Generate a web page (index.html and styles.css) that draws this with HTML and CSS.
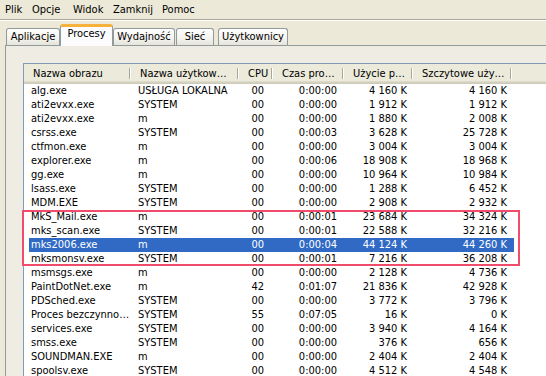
FILE: index.html
```html
<!DOCTYPE html>
<html lang="pl">
<head>
    <meta charset="UTF-8">
    <title>Menedżer zadań Windows</title>
    <link rel="stylesheet" href="styles.css">
</head>
<body>
    <div class="menubar">
        <span class="menu-item">Plik</span>
        <span class="menu-item">Opcje</span>
        <span class="menu-item">Widok</span>
        <span class="menu-item">Zamknij</span>
        <span class="menu-item">Pomoc</span>
    </div>

    <div class="tabs">
        <div class="tab tab-apps">Aplikacje</div>
        <div class="tab tab-procs active">Procesy</div>
        <div class="tab tab-perf">Wydajność</div>
        <div class="tab tab-net">Sieć</div>
        <div class="tab tab-users">Użytkownicy</div>
    </div>

    <div class="panel">
        <div class="listview">
            <table class="proc-table">
                <colgroup>
                    <col class="c-name">
                    <col class="c-user">
                    <col class="c-cpu">
                    <col class="c-time">
                    <col class="c-mem">
                    <col class="c-peak">
                    <col class="c-fill">
                </colgroup>
                <thead>
                    <tr>
                        <th>Nazwa obrazu</th>
                        <th>Nazwa użytkow…</th>
                        <th>CPU</th>
                        <th>Czas pro…</th>
                        <th>Użycie p…</th>
                        <th>Szczytowe uży…</th>
                        <th class="filler"></th>
                    </tr>
                </thead>
                <tbody>
                    <tr><td>alg.exe</td><td>USŁUGA LOKALNA</td><td class="cpu">00</td><td class="time">0:00:00</td><td class="mem">4 160 K</td><td class="peak">4 160 K</td><td></td></tr>
                    <tr><td>ati2evxx.exe</td><td>SYSTEM</td><td class="cpu">00</td><td class="time">0:00:00</td><td class="mem">1 912 K</td><td class="peak">1 912 K</td><td></td></tr>
                    <tr><td>ati2evxx.exe</td><td>m</td><td class="cpu">00</td><td class="time">0:00:00</td><td class="mem">1 880 K</td><td class="peak">2 008 K</td><td></td></tr>
                    <tr><td>csrss.exe</td><td>SYSTEM</td><td class="cpu">00</td><td class="time">0:00:03</td><td class="mem">3 628 K</td><td class="peak">25 728 K</td><td></td></tr>
                    <tr><td>ctfmon.exe</td><td>m</td><td class="cpu">00</td><td class="time">0:00:00</td><td class="mem">3 004 K</td><td class="peak">3 004 K</td><td></td></tr>
                    <tr><td>explorer.exe</td><td>m</td><td class="cpu">00</td><td class="time">0:00:06</td><td class="mem">18 908 K</td><td class="peak">18 968 K</td><td></td></tr>
                    <tr><td>gg.exe</td><td>m</td><td class="cpu">00</td><td class="time">0:00:00</td><td class="mem">10 964 K</td><td class="peak">10 984 K</td><td></td></tr>
                    <tr><td>lsass.exe</td><td>SYSTEM</td><td class="cpu">00</td><td class="time">0:00:00</td><td class="mem">1 288 K</td><td class="peak">6 452 K</td><td></td></tr>
                    <tr><td>MDM.EXE</td><td>SYSTEM</td><td class="cpu">00</td><td class="time">0:00:00</td><td class="mem">2 908 K</td><td class="peak">2 932 K</td><td></td></tr>
                    <tr><td>MkS_Mail.exe</td><td>m</td><td class="cpu">00</td><td class="time">0:00:01</td><td class="mem">23 684 K</td><td class="peak">34 324 K</td><td></td></tr>
                    <tr><td>mks_scan.exe</td><td>SYSTEM</td><td class="cpu">00</td><td class="time">0:00:01</td><td class="mem">22 588 K</td><td class="peak">32 216 K</td><td></td></tr>
                    <tr class="selected"><td>mks2006.exe</td><td>m</td><td class="cpu">00</td><td class="time">0:00:04</td><td class="mem">44 124 K</td><td class="peak">44 260 K</td><td></td></tr>
                    <tr><td>mksmonsv.exe</td><td>SYSTEM</td><td class="cpu">00</td><td class="time">0:00:01</td><td class="mem">7 216 K</td><td class="peak">36 208 K</td><td></td></tr>
                    <tr><td>msmsgs.exe</td><td>m</td><td class="cpu">00</td><td class="time">0:00:00</td><td class="mem">2 128 K</td><td class="peak">4 736 K</td><td></td></tr>
                    <tr><td>PaintDotNet.exe</td><td>m</td><td class="cpu">42</td><td class="time">0:01:07</td><td class="mem">21 836 K</td><td class="peak">42 928 K</td><td></td></tr>
                    <tr><td>PDSched.exe</td><td>SYSTEM</td><td class="cpu">00</td><td class="time">0:00:00</td><td class="mem">3 772 K</td><td class="peak">3 796 K</td><td></td></tr>
                    <tr><td>Proces bezczynno…</td><td>SYSTEM</td><td class="cpu">55</td><td class="time">0:07:05</td><td class="mem">16 K</td><td class="peak">0 K</td><td></td></tr>
                    <tr><td>services.exe</td><td>SYSTEM</td><td class="cpu">00</td><td class="time">0:00:00</td><td class="mem">3 940 K</td><td class="peak">4 164 K</td><td></td></tr>
                    <tr><td>smss.exe</td><td>SYSTEM</td><td class="cpu">00</td><td class="time">0:00:00</td><td class="mem">376 K</td><td class="peak">656 K</td><td></td></tr>
                    <tr><td>SOUNDMAN.EXE</td><td>m</td><td class="cpu">00</td><td class="time">0:00:00</td><td class="mem">2 404 K</td><td class="peak">2 404 K</td><td></td></tr>
                    <tr><td>spoolsv.exe</td><td>SYSTEM</td><td class="cpu">00</td><td class="time">0:00:00</td><td class="mem">4 512 K</td><td class="peak">4 548 K</td><td></td></tr>
                </tbody>
            </table>
            <!-- red frame drawn over the mks rows -->
            <div class="highlight-box"></div>
        </div>
    </div>
</body>
</html>
```

FILE: styles.css
```css
html, body {
    height: 100%;
}

body {
    margin: 0;
    overflow: hidden;
    background-color: #ece9d8;
    color: #000;
    font-family: "DejaVu Sans Condensed", "Liberation Sans", sans-serif;
    font-size: 11px;
}

/* menu */
.menubar {
    display: grid;
    grid-template-columns: 27px 41px 40px 49px auto;
    height: 19px;
    padding-left: 5px;
    align-items: center;
    border-bottom: 1px solid #aca899;
    box-shadow: 0 1px 0 #fff;
}

.menu-item {
    line-height: 17px;
    white-space: nowrap;
}

/* tabs */
.tabs {
    display: flex;
    align-items: flex-end;
    height: 26px;
    padding-left: 6px;
    margin-bottom: -1px;
    position: relative;
    z-index: 1;
}

.tab {
    box-sizing: border-box;
    height: 17px;
    line-height: 16px;
    margin-bottom: 1px;
    text-align: center;
    white-space: nowrap;
    border: 1px solid #919b9c;
    border-bottom: none;
    border-radius: 3px 3px 0 0;
    background: linear-gradient(#fefefe, #f4f3ee 60%, #e5e3da);
}

.tab.active {
    height: 22px;
    line-height: 14px;
    margin-bottom: 0;
    padding-bottom: 5px;
    border-top: 3px solid #f7b23b;
    background: #fcfcfe;
}

.tab-apps  { width: 54px; }
.tab-procs { width: 53px; }
.tab-perf  { width: 62px; margin-left: 0; }
.tab-net   { width: 38px; margin-left: 1px; }
.tab-users { width: 70px; margin-left: 4px; }

/* panel */
.panel {
    margin-left: 5px;
    border-left: 1px solid #919b9c;
    border-top: 1px solid #919b9c;
    background: #efede3;
    padding: 17px 0 0 17px;
    height: 400px;
}

.listview {
    position: relative;
    width: 560px;
    border: 1px solid #7f9db9;
    border-right: none;
    background: #fff;
}

.proc-table {
    table-layout: fixed;
    border-collapse: collapse;
    width: 559px;
}

.c-name { width: 107px; }
.c-user { width: 108px; }
.c-cpu  { width: 34px; }
.c-time { width: 71px; }
.c-mem  { width: 69px; }
.c-peak { width: 99px; }

.proc-table th {
    position: relative;
    height: 20px;
    padding: 0 0 2px 9px;
    box-sizing: border-box;
    text-align: left;
    font-weight: normal;
    white-space: nowrap;
    overflow: hidden;
    background: linear-gradient(#ebeadb 85%, #e2decd 85%, #d6d2c2 92%, #cbc7b8);
}

.proc-table th::after {
    content: "";
    position: absolute;
    right: 1px;
    top: 4px;
    bottom: 5px;
    width: 1px;
    background: #aca899;
    box-shadow: 1px 0 0 #fff;
}

.proc-table th.filler::after {
    display: none;
}

.proc-table td {
    height: 14px;
    line-height: 14px;
    padding: 0 0 0 7px;
    white-space: nowrap;
    overflow: hidden;
}

.proc-table td.cpu  { text-align: right; padding-right: 9px; }
.proc-table td.time { text-align: right; padding-right: 7px; }
.proc-table td.mem  { text-align: right; padding-right: 6px; }
.proc-table td.peak { text-align: right; padding-right: 5px; }

.proc-table tr.selected td {
    background: #316ac5;
    color: #fff;
}

.proc-table tr.selected td:first-child {
    background: linear-gradient(to right, #fff 5px, #316ac5 5px);
}

.proc-table tr.selected td:last-child {
    background: linear-gradient(to right, #316ac5 2px, #fff 2px);
}

.highlight-box {
    position: absolute;
    left: -2px;
    top: 146px;
    width: 498px;
    height: 56px;
    box-sizing: border-box;
    border: 2px solid #f04c6c;
}
```
